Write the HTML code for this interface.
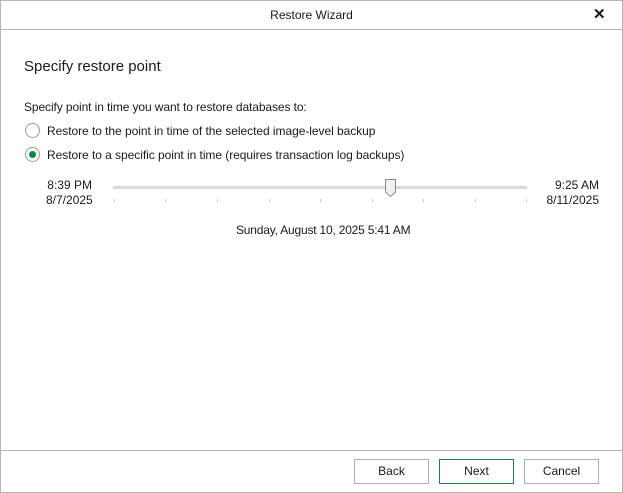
<!DOCTYPE html><html><head><style>
body{margin:0;width:623px;height:493px;background:#fff;font-family:"Liberation Sans",sans-serif;color:#1a1a1a;position:relative;overflow:hidden}
.a{position:absolute;white-space:nowrap}
.btn{position:absolute;top:459px;width:73px;height:23px;border:1px solid #adadad;font-size:12px;text-align:center;line-height:23px;background:#fff}
.t{position:absolute;top:199px;width:1px;height:3px;background:#c8c8c8}
</style></head><body>
<div style="position:absolute;left:0;top:0;width:621px;height:491px;border:1px solid #b4b4b4"></div>
<div class="a" style="left:0;top:29px;width:623px;height:1px;background:#b4b4b4"></div>
<div class="a" style="left:0;top:450px;width:623px;height:1px;background:#b4b4b4"></div>
<div class="a" style="left:0;width:623px;top:8px;text-align:center;font-size:12px">Restore Wizard</div>
<div class="a" style="left:593px;top:5px;font-size:15px;font-weight:bold">✕</div>
<div class="a" style="left:24px;top:58px;font-size:15px">Specify restore point</div>
<div class="a" style="left:24px;top:100px;font-size:12px;letter-spacing:-0.1px">Specify point in time you want to restore databases to:</div>
<div class="a" style="left:25px;top:123px;width:13px;height:13px;border:1px solid #999;border-radius:50%"></div>
<div class="a" style="left:47px;top:124px;font-size:12px;letter-spacing:-0.05px">Restore to the point in time of the selected image-level backup</div>
<div class="a" style="left:25px;top:147px;width:13px;height:13px;border:1px solid #999;border-radius:50%"></div>
<div class="a" style="left:29px;top:151px;width:7px;height:7px;background:#0b8a3c;border-radius:50%"></div>
<div class="a" style="left:47px;top:148px;font-size:12px;letter-spacing:-0.05px">Restore to a specific point in time (requires transaction log backups)</div>
<div class="a" style="left:46px;top:178px;font-size:12px;line-height:15px;text-align:right;width:46px">8:39 PM<br>8/7/2025</div>
<div class="a" style="left:545px;top:178px;font-size:12px;line-height:15px;text-align:right;width:54px">9:25 AM<br>8/11/2025</div>
<div class="a" style="left:113px;top:186px;width:414px;height:3px;background:#e0e0e0;border:1px solid #d4d4d4;box-sizing:border-box"></div>
<svg class="a" style="left:385px;top:179px" width="12" height="19"><path d="M0.5 0.5H10.5V13L5.5 17.5L0.5 13Z" fill="#f0f0f0" stroke="#8a8a8a"/></svg>
<div class="t" style="left:114px"></div><div class="t" style="left:165px"></div><div class="t" style="left:217px"></div><div class="t" style="left:269px"></div><div class="t" style="left:320px"></div><div class="t" style="left:372px"></div><div class="t" style="left:423px"></div><div class="t" style="left:475px"></div><div class="t" style="left:526px"></div>
<div class="a" style="left:236px;top:223px;font-size:12px;letter-spacing:-0.2px">Sunday, August 10, 2025 5:41 AM</div>
<div class="btn" style="left:354px">Back</div>
<div class="btn" style="left:439px;border-color:#1e8449">Next</div>
<div class="btn" style="left:524px">Cancel</div>
</body></html>
